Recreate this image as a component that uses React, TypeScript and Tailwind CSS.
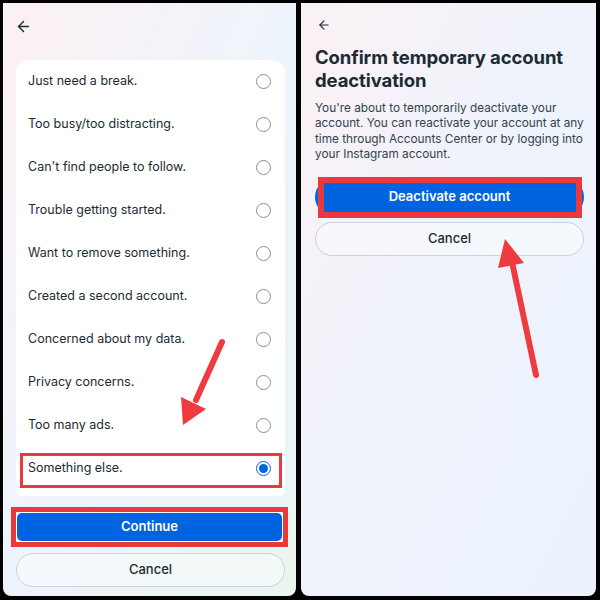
import { ArrowLeft } from "lucide-react";

const reasons = [
  "Just need a break.",
  "Too busy/too distracting.",
  "Can't find people to follow.",
  "Trouble getting started.",
  "Want to remove something.",
  "Created a second account.",
  "Concerned about my data.",
  "Privacy concerns.",
  "Too many ads.",
  "Something else.",
];

const Radio = ({ checked }: { checked?: boolean }) =>
  checked ? (
    <div className="w-[15px] h-[15px] rounded-full border-[1.5px] border-[#0064e0] flex items-center justify-center">
      <div className="w-[9px] h-[9px] rounded-full bg-[#0064e0]" />
    </div>
  ) : (
    <div className="w-[15px] h-[15px] rounded-full border-[1.5px] border-[#8a8d91]" />
  );

const App = () => {
  return (
    <div
      className="relative w-[600px] h-[600px] bg-black flex gap-[5px] pt-[3px] px-[3px] pb-[4px] text-[#1c2b33]"
      style={{ fontFamily: "Inter, 'Noto Sans', sans-serif" }}
    >
      {/* left screen */}
      <div className="w-[293px] shrink-0 rounded-b-lg bg-gradient-to-br from-[#fcf0f3] via-[#eef4fc] to-[#eaf5f1] flex flex-col">
        <div className="h-[57px] pl-[12px] pt-[15px]">
          <ArrowLeft size={17} strokeWidth={2} />
        </div>
        <div className="ml-[13px] mr-[11px] bg-white rounded-t-xl rounded-b-md pb-[6px]">
          {reasons.map((r, i) => (
            <div key={r} className="relative h-[43px] flex items-center justify-between pl-[12px] pr-[14px]">
              <span className="text-[12.5px]">{r}</span>
              <Radio checked={i === 9} />
              {i === 9 && (
                <div className="absolute left-[4px] right-[3px] top-[6px] bottom-[2px] border-[3px] border-[#e8393f]" />
              )}
            </div>
          ))}
        </div>
        <div className="mt-[11px] mx-[8px] border-[5px] border-[#e8393f] bg-white p-[1px]">
          <div className="h-[28px] rounded-[5px] bg-[#0064e0] flex items-center justify-center text-white text-[13px] font-semibold">
            Continue
          </div>
        </div>
        <div className="mt-[6px] ml-[13px] mr-[11px] h-[34px] rounded-full border border-[#cbd2d9] bg-white/40 flex items-center justify-center text-[13px] font-medium">
          Cancel
        </div>
      </div>

      {/* right screen */}
      <div className="w-[295px] shrink-0 rounded-b-lg bg-gradient-to-br from-[#fbf1f5] via-[#eef3fc] to-[#ecf2fb] flex flex-col pl-[14px] pr-[12px]">
        <div className="h-[43px] pl-[2px] pt-[15px]">
          <ArrowLeft size={14} strokeWidth={2} />
        </div>
        <h1 className="text-[18.5px] leading-[23px] font-bold tracking-[-0.1px]">
          Confirm temporary account deactivation
        </h1>
        <p className="mt-[9px] text-[11.8px] leading-[15.3px] text-[#33424c] whitespace-nowrap">
          You're about to temporarily deactivate your
          <br />
          account. You can reactivate your account at any
          <br />
          time through Accounts Center or by logging into
          <br />
          your Instagram account.
        </p>
        <div className="relative mt-[16px] h-[38px] rounded-full bg-[#0064e0] flex items-center justify-center text-white text-[13px] font-semibold">
          Deactivate account
          <div className="absolute left-[3px] right-[2px] top-[-1px] bottom-[-2px] border-[6px] border-[#e8393f]" />
        </div>
        <div className="mt-[6px] h-[34px] rounded-full border border-[#cbd2d9] bg-white/40 flex items-center justify-center text-[13px] font-medium">
          Cancel
        </div>
      </div>

      {/* annotation arrows */}
      <svg className="absolute inset-0 pointer-events-none" width="600" height="600" viewBox="0 0 600 600">
        <line x1="222" y1="342" x2="196" y2="400" stroke="#ef3b3f" strokeWidth="6" strokeLinecap="round" />
        <polygon points="183,425 181,397 206,409" fill="#ef3b3f" />
        <line x1="536" y1="375" x2="512" y2="262" stroke="#ef3b3f" strokeWidth="6" strokeLinecap="round" />
        <polygon points="505,239 498,268 524,263" fill="#ef3b3f" />
      </svg>
    </div>
  );
};

export default App;
